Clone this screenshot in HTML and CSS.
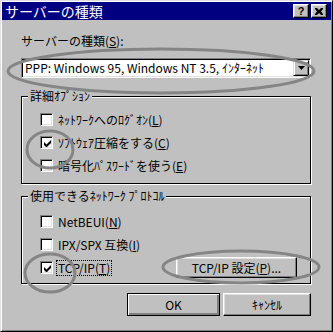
FILE: index.html
```html
<!DOCTYPE html>
<html lang="ja">
<head>
    <meta charset="UTF-8">
    <title>サーバーの種類</title>
    <link rel="stylesheet" href="styles.css">
</head>
<body>
    <div class="window">
        <div class="titlebar">
            <span class="title">サーバーの種類</span>
            <div class="title-buttons">
                <span class="tbtn help">?</span>
                <span class="tbtn">
                    <svg width="8" height="7" viewBox="0 0 8 7"><path d="M0 0h2l2 2 2-2h2v1L6 3.5 8 6v1H6L4 5 2 7H0V6l2-2.5L0 1z" fill="#000"/></svg>
                </span>
            </div>
        </div>

        <div class="content">
            <div class="field-label">サーバーの種類(<u>S</u>):</div>
            <div class="combo">
                <span class="combo-text">PPP: Windows 95, Windows NT 3.5, ｲﾝﾀｰﾈｯﾄ</span>
                <span class="combo-btn">
                    <svg width="7" height="4" viewBox="0 0 7 4"><path d="M0 0h7L3.5 4z" fill="#000"/></svg>
                </span>
            </div>

            <fieldset class="group group-options">
                <legend>詳細ｵﾌﾟｼｮﾝ</legend>
                <div class="row"><span class="check"></span><span>ﾈｯﾄﾜｰｸへのﾛｸﾞｵﾝ(<u>L</u>)</span></div>
                <div class="row"><span class="check checked"><svg width="7" height="7" viewBox="0 0 7 7"><path d="M0 2v3l2 2h1l4-4V0L2.5 4.5z" fill="#000"/></svg></span><span>ｿﾌﾄｳｪｱ圧縮をする(<u>C</u>)</span></div>
                <div class="row"><span class="check"></span><span>暗号化ﾊﾟｽﾜｰﾄﾞを使う(<u>E</u>)</span></div>
            </fieldset>

            <fieldset class="group group-protocols">
                <legend>使用できるﾈｯﾄﾜｰｸ ﾌﾟﾛﾄｺﾙ</legend>
                <div class="row"><span class="check"></span><span>NetBEUI(<u>N</u>)</span></div>
                <div class="row"><span class="check"></span><span>IPX/SPX 互換(<u>I</u>)</span></div>
                <div class="row">
                    <span class="check checked"><svg width="7" height="7" viewBox="0 0 7 7"><path d="M0 2v3l2 2h1l4-4V0L2.5 4.5z" fill="#000"/></svg></span>
                    <span class="focused">TCP/IP(<u>T</u>)</span>
                    <button class="btn btn-settings">TCP/IP 設定(<u>P</u>)...</button>
                </div>
            </fieldset>

            <div class="actions">
                <button class="btn btn-default">OK</button>
                <button class="btn btn-cancel">ｷｬﾝｾﾙ</button>
            </div>
        </div>

        <!-- hand-drawn marks over the dialog -->
        <svg class="marks" width="333" height="332" viewBox="0 0 333 332">
            <g fill="none" stroke="#858585" stroke-width="3">
                <ellipse cx="160" cy="70" rx="153" ry="22"/>
                <ellipse cx="49" cy="148.5" rx="23" ry="18.5"/>
                <ellipse cx="49" cy="272" rx="25" ry="19"/>
                <ellipse cx="240" cy="266" rx="78" ry="16"/>
            </g>
        </svg>
    </div>
</body>
</html>
```

FILE: styles.css
```css
/* Page */
body {
    margin: 0;
    background-color: #c0c0c0;
    font-family: "Noto Sans CJK JP", "Liberation Sans", sans-serif;
    font-size: 12px;
    color: #000;
}

/* Window frame */
.window {
    position: relative;
    width: 333px;
    height: 332px;
    box-sizing: border-box;
    border: 1px solid;
    border-color: #dfdfdf #000 #000 #dfdfdf;
    padding: 1px;
    box-shadow: inset 1px 1px 0 #fff, inset -1px -1px 0 #808080;
    background-color: #c0c0c0;
}

/* Title bar */
.titlebar {
    display: flex;
    align-items: center;
    height: 18px;
    padding: 0 4px 0 3px;
    background-color: #000080;
}

.title {
    flex: 1;
    color: #fff;
    font-size: 14px;
    line-height: 18px;
}

.title-buttons {
    display: flex;
    gap: 2px;
}

.tbtn {
    display: flex;
    align-items: center;
    justify-content: center;
    width: 16px;
    height: 14px;
    box-sizing: border-box;
    background-color: #c0c0c0;
    border: 1px solid;
    border-color: #fff #000 #000 #fff;
    box-shadow: inset -1px -1px 0 #808080, inset 1px 1px 0 #dfdfdf;
}

.tbtn.help {
    font-family: "Liberation Sans", sans-serif;
    font-weight: bold;
    font-size: 11px;
    line-height: 12px;
}

/* Content */
.content {
    padding: 14px 20px 0 19px;
}

.field-label {
    line-height: 14px;
}

u {
    text-decoration: underline;
    text-underline-offset: 1px;
}

/* Combo box */
.combo {
    display: flex;
    align-items: center;
    height: 20px;
    margin-top: 10px;
    box-sizing: border-box;
    background-color: #fff;
    border: 1px solid;
    border-color: #808080 #fff #fff #808080;
    box-shadow: inset 1px 1px 0 #000, inset -1px -1px 0 #dfdfdf;
    padding: 2px 2px 2px 3px;
}

.combo-text {
    flex: 1;
    line-height: 14px;
    white-space: nowrap;
}

.combo-btn {
    display: flex;
    align-items: center;
    justify-content: center;
    width: 16px;
    height: 16px;
    box-sizing: border-box;
    background-color: #c0c0c0;
    border: 1px solid;
    border-color: #dfdfdf #000 #000 #dfdfdf;
    box-shadow: inset 1px 1px 0 #fff, inset -1px -1px 0 #808080;
    margin-right: -1px;
}

/* Group boxes */
.group {
    margin: 11px 0 0 0;
    padding: 5px 0 6px 18px;
    border: 1px solid #000;
    box-shadow: inset 1px 1px 0 #fff, 1px 1px 0 #fff;
    min-width: 0;
}

.group legend {
    margin-left: -12px;
    padding: 0 2px;
    line-height: 14px;
    background-color: #c0c0c0;
}

.group-protocols {
    margin-top: 5px;
    padding-top: 7px;
    padding-bottom: 4px;
}

.row {
    display: flex;
    align-items: center;
    gap: 5px;
    height: 23px;
    line-height: 14px;
}

/* Checkboxes */
.check {
    display: flex;
    align-items: center;
    justify-content: center;
    width: 13px;
    height: 13px;
    box-sizing: border-box;
    background-color: #fff;
    border: 1px solid;
    border-color: #808080 #fff #fff #808080;
    box-shadow: inset 1px 1px 0 #000, inset -1px -1px 0 #dfdfdf;
    flex-shrink: 0;
}

.check svg {
    margin: 1px 0 0 1px;
}

.focused {
    border: 1px dotted #000;
    padding: 0 1px;
    margin-left: -2px;
}

/* Buttons */
.btn {
    height: 23px;
    box-sizing: border-box;
    padding: 0;
    font-family: "Noto Sans CJK JP", "Liberation Sans", sans-serif;
    font-size: 12px;
    line-height: 14px;
    color: #000;
    background-color: #c0c0c0;
    border: 1px solid;
    border-color: #fff #000 #000 #fff;
    box-shadow: inset -1px -1px 0 #808080, inset 1px 1px 0 #dfdfdf;
}

.btn-settings {
    width: 121px;
    height: 21px;
    margin-left: auto;
    margin-right: 13px;
}

.actions {
    display: flex;
    justify-content: flex-end;
    gap: 3px;
    margin-top: 9px;
}

.btn-default {
    width: 93px;
    border-color: #000;
    box-shadow: inset 1px 1px 0 #fff, inset -1px -1px 0 #808080, inset -2px -2px 0 #808080;
}

.btn-cancel {
    width: 88px;
}

/* Annotation ellipses */
.marks {
    position: absolute;
    left: 0;
    top: 0;
    pointer-events: none;
}
```
